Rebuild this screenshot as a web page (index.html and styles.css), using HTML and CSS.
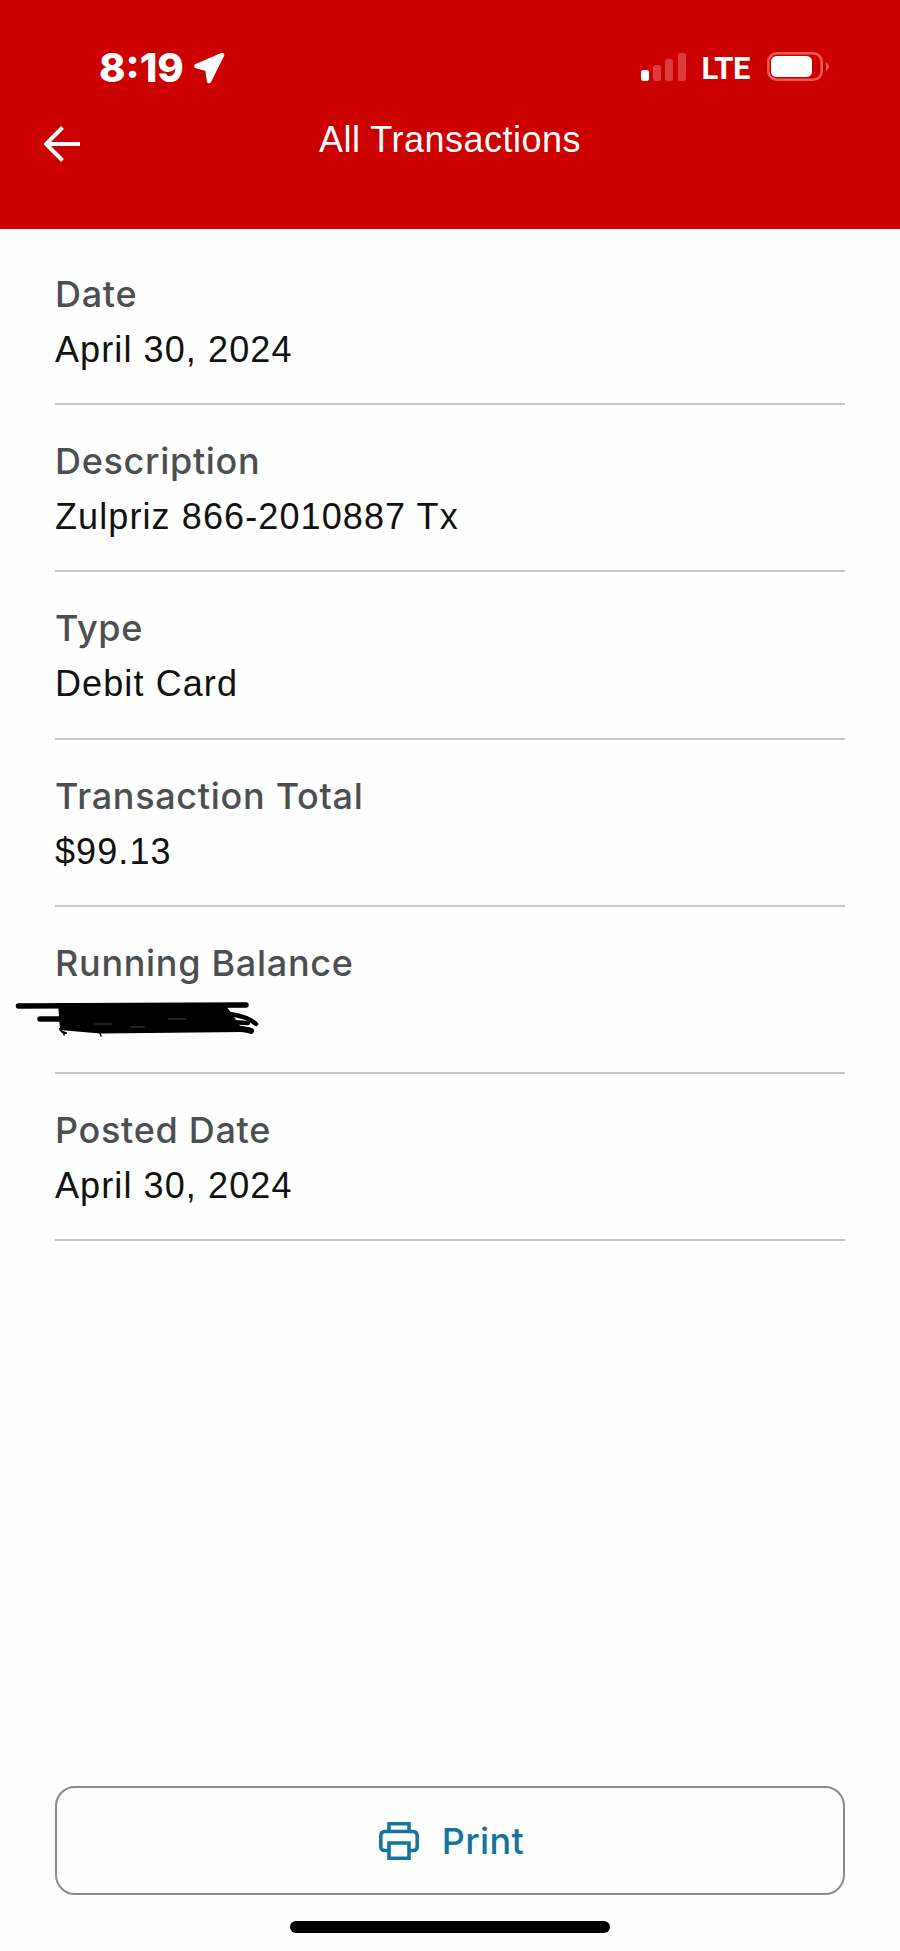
FILE: index.html
```html
<!DOCTYPE html>
<html lang="en">
<head>
<meta charset="utf-8">
<title>All Transactions</title>
<link rel="stylesheet" href="styles.css">
</head>
<body>
<div class="phone">
  <header class="top">
    <div class="status">
      <div class="status-left">
        <span class="time">8:19</span>
        <svg class="loc" viewBox="0 0 32 32"><path d="M3.5 14 L29 3 L16 29 L14.5 17 Z" fill="#fff" stroke="#fff" stroke-width="4.5" stroke-linejoin="round"/></svg>
      </div>
      <div class="status-right">
        <svg class="signal" viewBox="0 0 45 28">
          <rect x="0" y="17" width="8" height="11" rx="2.5" fill="#fff"/>
          <rect x="12" y="12" width="8" height="16" rx="2.5" fill="#de3c3c"/>
          <rect x="24" y="6" width="8" height="22" rx="2.5" fill="#de3c3c"/>
          <rect x="37" y="0" width="8" height="28" rx="2.5" fill="#de3c3c"/>
        </svg>
        <span class="lte">LTE</span>
        <svg class="battery" viewBox="0 0 62 29">
          <rect x="1.3" y="1.3" width="53.4" height="26.4" rx="8.5" fill="none" stroke="#f25a5a" stroke-width="2.6"/>
          <rect x="4" y="4" width="41" height="21" rx="5.5" fill="#fff"/>
          <path d="M59 10 Q62 12.5 62 14.5 Q62 16.5 59 19 Z" fill="#f25a5a"/>
        </svg>
      </div>
    </div>
    <nav class="nav">
      <svg class="back" viewBox="0 0 36 36"><path d="M36 18 H3 M18.5 1.5 L2 18 L18.5 34.5" fill="none" stroke="#fff" stroke-width="4"/></svg>
      <h1 class="title">All Transactions</h1>
    </nav>
  </header>

  <main class="details">
    <div class="row"><div class="label">Date</div><div class="value">April 30, 2024</div></div>
    <div class="row"><div class="label">Description</div><div class="value">Zulpriz 866-2010887 Tx</div></div>
    <div class="row"><div class="label">Type</div><div class="value">Debit Card</div></div>
    <div class="row"><div class="label">Transaction Total</div><div class="value">$99.13</div></div>
    <div class="row">
      <div class="label">Running Balance</div>
      <div class="value scribbled">
        <svg class="scribble" viewBox="0 0 270 55">
          <path d="M58 13 H224 L232 24 L244 42 L100 43.500 L60 40 Z" fill="#000"/>
          <g fill="none" stroke="#000" stroke-linecap="round">
            <path d="M18.500 16 L246 15" stroke-width="5.500"/>
            <path d="M40 29 H62" stroke-width="5.500"/>
            <path d="M205 22 Q245 23 256 34" stroke-width="4.500"/>
            <path d="M210 31 L248 33" stroke-width="4.500"/>
            <path d="M200 38 Q240 37 251 41" stroke-width="6"/>
            <path d="M60 39 Q62 43 66 43" stroke-width="2"/>
            <path d="M64 42 V45 M100 43 L101 46" stroke-width="1.500"/>
          </g>
          <path d="M94 34 H112 M168 29 H186 M130 37 H145" fill="none" stroke="#555" stroke-width="0.800"/>
        </svg>
      </div>
    </div>
    <div class="row"><div class="label">Posted Date</div><div class="value">April 30, 2024</div></div>
  </main>

  <footer class="foot">
    <button class="print" type="button">
      <svg class="print-icon" viewBox="0 0 40 38"><path d="M10 9 V1.800 H30 V9 M9 28.500 H6 Q1.800 28.500 1.800 24.500 V14 Q1.800 9.500 6 9.500 H34 Q38.200 9.500 38.200 14 V24.500 Q38.200 28.500 34 28.500 H31 M10 21 H30 V36.200 H10 Z" fill="none" stroke="#14749f" stroke-width="3.600"/></svg>
      <span>Print</span>
    </button>
    <div class="home-bar"></div>
  </footer>
</div>
</body>
</html>
```

FILE: styles.css
```css
* { box-sizing: border-box; }
html, body { margin: 0; padding: 0; }
body { background: #fefefe; font-family: "Liberation Sans", Arial, sans-serif; }

.phone { width: 900px; height: 1951px; display: flex; flex-direction: column; overflow: hidden; }

.top { height: 229px; background: #cc0000; color: #fff; flex: none; }

.status { display: flex; justify-content: space-between; padding: 50px 71px 0 99px; height: 118px; }
.status-left { display: flex; align-items: flex-start; gap: 9px; }
.time { font-family: Inter, sans-serif; font-weight: 800; font-size: 40px; line-height: 36px; }
.loc { width: 32px; height: 32px; margin-top: 2px; }
.status-right { display: flex; align-items: flex-start; }
.signal { width: 45px; height: 28px; margin-top: 3px; }
.lte { font-family: Roboto, sans-serif; font-weight: 700; font-size: 31px; line-height: 30px; margin: 4px 17px 0 16px; letter-spacing: -0.5px; }
.battery { width: 62px; height: 29px; margin-top: 2px; }

.nav { position: relative; display: flex; align-items: center; justify-content: center; height: 60px; margin-top: -8px; }
.back { position: absolute; left: 44px; top: 16px; width: 36px; height: 36px; }
.title { margin: 0; font-weight: 400; font-size: 36px; line-height: 58px; letter-spacing: 0.5px; }

.details { flex: 1; padding: 9px 55px 0; }
.row { height: 167.2px; padding-top: 36px; border-bottom: 2.5px solid #c6c6c6; }
.label { font-family: Inter, "Liberation Sans", sans-serif; font-weight: 500; font-size: 36px; line-height: 40px; letter-spacing: 0.7px; color: #4b4f52; }
.value { font-size: 36px; line-height: 40px; margin-top: 16px; color: #111; letter-spacing: 1.1px; height: 40px; }
.scribbled { position: relative; }
.scribble { position: absolute; left: -55px; top: -9px; width: 270px; height: 55px; }

.foot { flex: none; padding: 0 55px; height: 165px; }
.print { width: 100%; height: 109px; display: flex; align-items: center; justify-content: center; gap: 23px; background: #fefefe; border: 2.5px solid #8a8a8c; border-radius: 20px; color: #14749f; font-family: Inter, "Liberation Sans", sans-serif; font-weight: 500; font-size: 36px; letter-spacing: 0.4px; padding: 0 0 0 3px; }
.print-icon { width: 40px; height: 38px; }
.home-bar { width: 320px; height: 12px; border-radius: 6px; background: #000; margin: 26px auto 0; }
```
